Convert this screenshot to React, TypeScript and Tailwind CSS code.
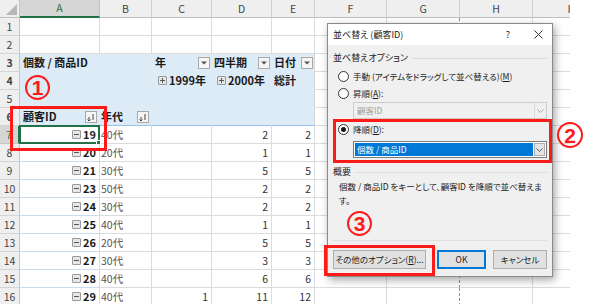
import React from "react";

const GRID =
  "grid grid-cols-[20px_80px_52px_60px_60px_43px_72px_73px_73px_73px]";
const LINE = "border-r border-b border-[#dcdcdc]";
const DASH = "border-r-[#8f8f8f] [border-right-style:dashed]";
const PIV = "bg-[#ddebf7] border-r border-b border-[#ddebf7]";

const data: { id: number; age: string; c?: number; d: number; e: number }[] = [
  { id: 19, age: "40代", d: 2, e: 2 },
  { id: 20, age: "20代", d: 1, e: 1 },
  { id: 21, age: "30代", d: 5, e: 5 },
  { id: 23, age: "50代", d: 2, e: 2 },
  { id: 24, age: "30代", d: 2, e: 2 },
  { id: 25, age: "40代", d: 1, e: 1 },
  { id: 26, age: "20代", d: 5, e: 5 },
  { id: 27, age: "30代", d: 3, e: 3 },
  { id: 28, age: "40代", d: 6, e: 6 },
  { id: 29, age: "40代", c: 1, d: 11, e: 12 },
];

function RowHead({ n, active }: { n: number; active?: boolean }) {
  return (
    <div
      className={`flex items-center justify-center border-b border-r text-[10.5px] ${
        active
          ? "border-r-2 border-b-[#c8c8c8] border-r-[#217346] bg-[#d6d6d6] text-[#217346]"
          : "border-b-[#d4d4d4] border-r-[#c4c4c4] bg-[#efefef] text-[#444]"
      }`}
    >
      {n}
    </div>
  );
}

function Blanks() {
  return (
    <>
      <div className={LINE} />
      <div className={`${LINE} ${DASH}`} />
      <div className={LINE} />
      <div className={LINE} />
    </>
  );
}

function DropBtn() {
  return (
    <span className="ml-auto mr-[1px] flex h-[12px] w-[12px] items-center justify-center border border-[#a9a9a9] bg-[#f5f5f5]">
      <svg width="6" height="4" viewBox="0 0 6 4">
        <path d="M0 0.5h6L3 3.5z" fill="#555" />
      </svg>
    </span>
  );
}

function SortBtn() {
  return (
    <span className="ml-auto mr-[2px] mt-auto mb-[2px] flex h-[12px] w-[12px] items-center justify-center border border-[#a9a9a9] bg-[#f5f5f5]">
      <svg width="8" height="8" viewBox="0 0 8 8">
        <path d="M2 8.5V4M0.5 6.5L2 8 3.5 6.5M6 1v6" stroke="#444" strokeWidth="1" fill="none" />
      </svg>
    </span>
  );
}

function Toggle({ plus }: { plus?: boolean }) {
  return (
    <span className="mr-[2px] inline-flex h-[9px] w-[9px] items-center justify-center rounded-[1px] border border-[#9a9a9a] bg-[#e6e6e6]">
      <svg width="7" height="7" viewBox="0 0 7 7">
        <path d={plus ? "M1 3.5h5M3.5 1v5" : "M1 3.5h5"} stroke="#555" strokeWidth="1" />
      </svg>
    </span>
  );
}

function Radio({ checked, children }: { checked?: boolean; children: React.ReactNode }) {
  return (
    <div className="ml-[5px] flex h-[12px] items-center">
      <span className="flex h-[11px] w-[11px] items-center justify-center rounded-full border border-[#333] bg-white">
        {checked && <span className="h-[5px] w-[5px] rounded-full bg-[#1a1a1a]" />}
      </span>
      <span className="ml-[4px] whitespace-nowrap">{children}</span>
    </div>
  );
}

function Chevron({ color }: { color: string }) {
  return (
    <svg width="7" height="4" viewBox="0 0 7 4">
      <path d="M0.5 0.5L3.5 3.5 6.5 0.5" stroke={color} strokeWidth="1" fill="none" />
    </svg>
  );
}

function Circled({ n, className }: { n: number; className: string }) {
  return (
    <div
      className={`absolute flex items-center justify-center rounded-full border-2 border-[#ff1a1a] font-['Liberation_Sans',sans-serif] text-[21px] font-bold leading-none text-[#ff1a1a] ${className}`}
    >
      {n}
    </div>
  );
}

export default function App() {
  return (
    <div className="relative h-[304px] w-[600px] overflow-hidden bg-white font-['Noto_Sans_CJK_JP',sans-serif]">
      <div className="w-[570px] overflow-hidden">
        {/* column headers */}
        <div className={`${GRID} h-[18px]`}>
          <div className="flex items-end justify-end border-b border-r border-b-[#bfbfbf] border-r-[#c4c4c4] bg-[#efefef] p-[2px]">
            <svg width="11" height="11" viewBox="0 0 11 11">
              <path d="M11 0V11H0z" fill="#b7b7b7" />
            </svg>
          </div>
          {["A", "B", "C", "D", "E", "F", "G", "H", "I"].map((c) => (
            <div
              key={c}
              className={`flex items-center justify-center border-r text-[10.5px] ${
                c === "A"
                  ? "border-b-2 border-b-[#217346] border-r-[#c4c4c4] bg-[#d6d6d6] text-[#217346]"
                  : "border-b border-b-[#bfbfbf] border-r-[#d0d0d0] bg-[#efefef] text-[#444]"
              }`}
            >
              {c}
            </div>
          ))}
        </div>

        {/* rows 1-2 */}
        {[1, 2].map((n) => (
          <div key={n} className={`${GRID} h-[18px]`}>
            <RowHead n={n} />
            <div className={LINE} />
            <div className={LINE} />
            <div className={LINE} />
            <div className={LINE} />
            <div className={LINE} />
            <Blanks />
          </div>
        ))}

        {/* pivot header rows 3-6 */}
        <div className={`${GRID} h-[18px] text-[11px] font-bold text-[#1a1a1a]`}>
          <RowHead n={3} />
          <div className={`${PIV} flex items-center whitespace-nowrap pl-[3px]`}>個数 / 商品ID</div>
          <div className={PIV} />
          <div className={`${PIV} flex items-center pl-[3px]`}>
            年<DropBtn />
          </div>
          <div className={`${PIV} flex items-center pl-[2px]`}>
            四半期<DropBtn />
          </div>
          <div className={`${PIV} flex items-center border-r-[#d4d4d4] pl-[2px]`}>
            日付<DropBtn />
          </div>
          <Blanks />
        </div>
        <div className={`${GRID} h-[18px] text-[11px] font-bold text-[#1a1a1a]`}>
          <RowHead n={4} />
          <div className={PIV} />
          <div className={PIV} />
          <div className={`${PIV} flex items-center pl-[6px]`}>
            <Toggle plus />
            1999年
          </div>
          <div className={`${PIV} flex items-center pl-[5px]`}>
            <Toggle plus />
            2000年
          </div>
          <div className={`${PIV} flex items-center border-r-[#d4d4d4] pl-[2px]`}>総計</div>
          <Blanks />
        </div>
        <div className={`${GRID} h-[18px]`}>
          <RowHead n={5} />
          <div className={PIV} />
          <div className={PIV} />
          <div className={PIV} />
          <div className={PIV} />
          <div className={`${PIV} border-r-[#d4d4d4]`} />
          <Blanks />
        </div>
        <div className={`${GRID} h-[18px] text-[11px] font-bold text-[#1a1a1a]`}>
          <RowHead n={6} />
          <div className={`${PIV} flex items-center border-b-[#9bc2e6] pl-[3px]`}>
            顧客ID<SortBtn />
          </div>
          <div className={`${PIV} flex items-center border-b-[#9bc2e6] pl-[1px]`}>
            年代<SortBtn />
          </div>
          <div className={`${PIV} border-b-[#9bc2e6]`} />
          <div className={`${PIV} border-b-[#9bc2e6]`} />
          <div className={`${PIV} border-b-[#9bc2e6] border-r-[#d4d4d4]`} />
          <Blanks />
        </div>

        {/* data rows 7-16 */}
        {data.map((r, i) => (
          <div key={r.id} className={`${GRID} h-[18px] text-[10.5px]`}>
            <RowHead n={7 + i} active={i === 0} />
            <div
              className={`relative flex items-center justify-end border-b border-r border-b-[#c9dcf0] border-r-[#dcdcdc] pr-[3px] text-[11px] font-bold text-[#1a1a1a]`}
            >
              <Toggle />
              {r.id}
              {i === 0 && (
                <span className="absolute -bottom-px -left-px -right-px -top-px border-2 border-[#217346]">
                  <span className="absolute -bottom-[3px] -right-[3px] h-[5px] w-[5px] border border-white bg-[#217346]" />
                </span>
              )}
            </div>
            <div className={`${LINE} flex items-center pl-[1px] text-[#555]`}>{r.age}</div>
            <div className={`${LINE} flex items-center justify-end pr-[3px] text-[#333]`}>{r.c ?? ""}</div>
            <div className={`${LINE} flex items-center justify-end pr-[3px] text-[#333]`}>{r.d}</div>
            <div className={`${LINE} flex items-center justify-end pr-[3px] text-[#333]`}>{r.e}</div>
            <Blanks />
          </div>
        ))}
      </div>

      {/* sort dialog */}
      <div className="absolute left-[327px] top-[23px] flex h-[254px] w-[226px] flex-col border border-[#8a8a8a] bg-[#f0f0f0] text-[8.5px] text-[#1a1a1a] shadow-[2px_3px_8px_rgba(0,0,0,0.35)] [font-feature-settings:'palt']">
        <div className="flex h-[21px] shrink-0 items-center bg-white pl-[5px] pr-[9px] text-[9px]">
          <span>並べ替え (顧客ID)</span>
          <span className="ml-auto mr-[24px]">?</span>
          <svg width="9" height="9" viewBox="0 0 9 9">
            <path d="M0.5 0.5l8 8M8.5 0.5l-8 8" stroke="#333" strokeWidth="1" />
          </svg>
        </div>
        <div className="flex flex-1 flex-col px-[5px]">
          <div className="mt-[7px] flex h-[12px] items-center text-[9px]">
            <span>並べ替えオプション</span>
            <span className="ml-[4px] h-px flex-1 bg-[#dcdcdc]" />
          </div>
          <div className="mt-[6px]">
            <Radio>
              手動 (アイテムをドラッグして並べ替える)(<span className="underline">M</span>)
            </Radio>
          </div>
          <div className="mt-[5px]">
            <Radio>
              昇順(<span className="underline">A</span>):
            </Radio>
          </div>
          <div className="ml-[20px] mt-[3px] flex h-[17px] items-center border border-[#cccccc] bg-[#f0f0f0]">
            <span className="pl-[3px] text-[#a0a0a0]">顧客ID</span>
            <span className="ml-auto flex h-full w-[12px] items-center justify-center border-l border-[#d9d9d9]">
              <Chevron color="#a8a8a8" />
            </span>
          </div>
          <div className="mt-[4px]">
            <Radio checked>
              降順(<span className="underline">D</span>):
            </Radio>
          </div>
          <div className="ml-[20px] mt-[6px] flex h-[17px] items-center border border-[#7a7a7a] bg-white p-[1px]">
            <span className="flex h-full flex-1 items-center bg-[#0078d7] pl-[2px] text-white">個数 / 商品ID</span>
            <span className="ml-[1px] flex h-full w-[11px] items-center justify-center border border-[#adadad] bg-[#e5e5e5]">
              <Chevron color="#555" />
            </span>
          </div>
          <div className="mt-[8px] flex h-[12px] items-center text-[9px]">
            <span>概要</span>
            <span className="ml-[4px] h-px flex-1 bg-[#dcdcdc]" />
          </div>
          <div className="mt-[1px] pl-[6px] leading-[14px]">
            <div className="whitespace-nowrap">個数 / 商品ID をキーとして、顧客ID を降順で並べ替えま</div>
            <div>す。</div>
          </div>
          <div className="mt-auto h-px bg-[#dfdfdf]" />
          <div className="mb-[7px] mt-[9px] flex h-[19px] items-stretch">
            <button className="w-[93px] border border-[#adadad] bg-[#e1e1e1]">
              その他のオプション(<span className="underline">R</span>)...
            </button>
            <button className="ml-auto w-[49px] border-2 border-[#0078d7] bg-[#e1e1e1]">OK</button>
            <button className="ml-[7px] w-[54px] border border-[#adadad] bg-[#e1e1e1]">キャンセル</button>
          </div>
        </div>
      </div>

      {/* annotations */}
      <div className="absolute left-[10px] top-[106px] h-[45px] w-[97px] border-[3px] border-[#ff1a1a]" />
      <div className="absolute left-[333px] top-[119px] h-[44px] w-[219px] border-[3px] border-[#ff1a1a]" />
      <div className="absolute left-[324px] top-[245px] h-[31px] w-[111px] border-[3px] border-[#ff1a1a]" />
      <Circled n={1} className="left-[25px] top-[75px] h-[25px] w-[25px]" />
      <Circled n={2} className="left-[557px] top-[122px] h-[26px] w-[26px]" />
      <Circled n={3} className="left-[347px] top-[211px] h-[25px] w-[25px]" />
    </div>
  );
}
